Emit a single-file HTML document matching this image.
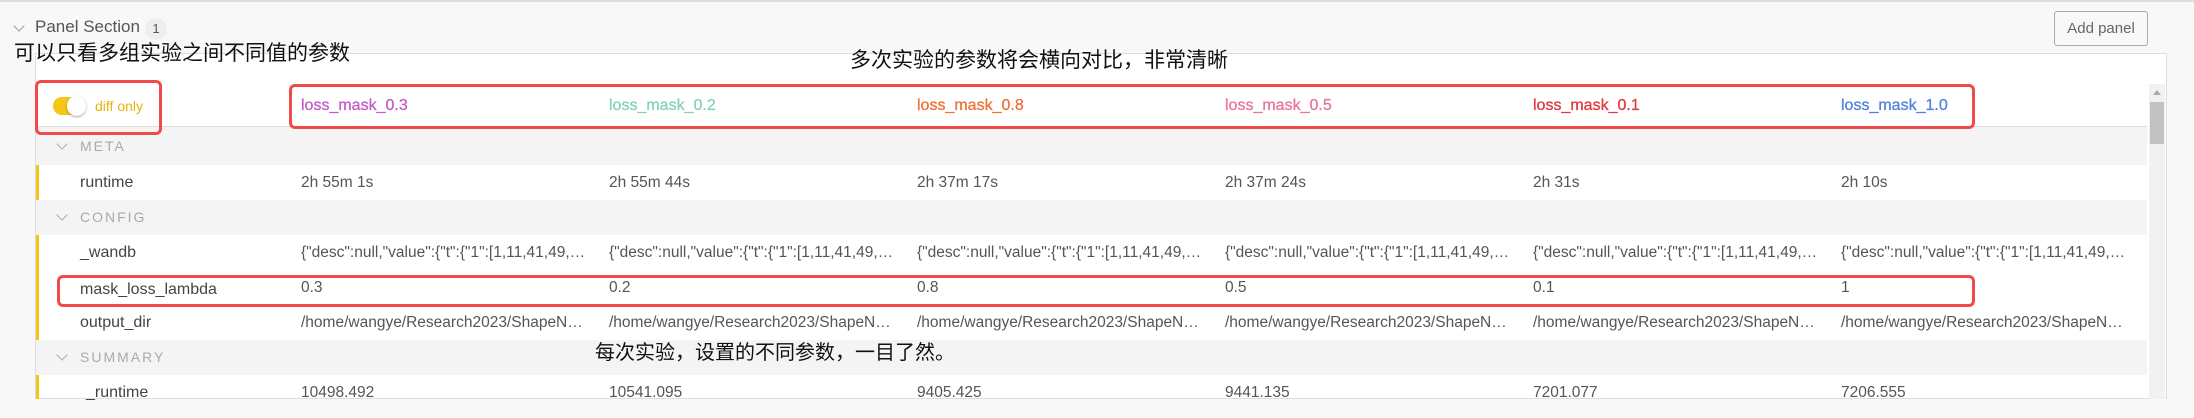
<!DOCTYPE html>
<html><head><meta charset="utf-8"><style>
*{margin:0;padding:0;box-sizing:border-box}
body{width:2194px;height:418px;background:#f8f8f8;position:relative;overflow:hidden;font-family:"Liberation Sans","Noto Sans CJK SC",sans-serif;color:#555}
.a{position:absolute;white-space:nowrap}
.cn{font-family:"Liberation Sans","Noto Sans CJK SC",sans-serif;color:#111;font-size:21px;line-height:24px}
.sec{position:absolute;left:36px;width:2111px;background:#f4f4f4}
.bar{position:absolute;left:36px;width:3px;background:#f5c518}
.lab{position:absolute;left:80px;font-size:16px;color:#444;line-height:35px}
.cell{position:absolute;font-size:15.5px;color:#555;line-height:35px;width:290px;overflow:hidden;white-space:nowrap;text-overflow:ellipsis}
.sl{position:absolute;left:80px;font-size:14px;letter-spacing:2px;color:#aaa;line-height:35px}
.chev{position:absolute;left:58px;width:8px;height:8px;border-right:1.5px solid #aaa;border-bottom:1.5px solid #aaa;transform:rotate(45deg)}
.rn{position:absolute;top:96px;font-size:16px;line-height:20px;-webkit-text-stroke:0.3px currentColor}
</style></head><body>
<div class="a" style="left:0;top:0;width:2194px;height:2px;background:#ddd"></div>
<div class="a" style="left:15px;top:22px;width:8px;height:8px;border-right:1.5px solid #999;border-bottom:1.5px solid #999;transform:rotate(45deg)"></div>
<div class="a" style="left:35px;top:17px;font-size:17px;color:#555">Panel Section</div>
<div class="a" style="left:145px;top:18px;width:22px;height:22px;border-radius:11px;background:#eee;font-size:13px;text-align:center;line-height:22px;color:#555">1</div>
<div class="a" style="left:2054px;top:11px;width:94px;height:35px;border:1px solid #aaa;border-radius:3px;background:#f8f8f8;font-size:15px;text-align:center;line-height:33px;color:#666">Add panel</div>

<div class="a" style="left:35px;top:53px;width:2132px;height:346px;border:1px solid #ddd;background:#fff"></div>
<div class="a" style="left:36px;top:126px;width:2111px;height:1px;background:#ddd"></div>

<div class="sec" style="top:127px;height:38px"></div><div class="chev" style="top:140px"></div><div class="sl" style="top:129px">META</div>
<div class="bar" style="top:165px;height:35px"></div>
<div class="lab" style="top:165px">runtime</div>
<div class="sec" style="top:200px;height:35px"></div><div class="chev" style="top:211px"></div><div class="sl" style="top:200px">CONFIG</div>
<div class="bar" style="top:235px;height:105px"></div>
<div class="lab" style="top:235px">_wandb</div>
<div class="lab" style="top:272px">mask_loss_lambda</div>
<div class="lab" style="top:305px">output_dir</div>
<div class="sec" style="top:340px;height:35px"></div><div class="chev" style="top:351px"></div><div class="sl" style="top:340px">SUMMARY</div>
<div class="bar" style="top:375px;height:24px"></div>
<div class="lab" style="top:375px;left:86px">_runtime</div>

<div class="rn" style="left:301px;color:#c65cc6">loss_mask_0.3</div>
<div class="rn" style="left:609px;color:#86d1bb">loss_mask_0.2</div>
<div class="rn" style="left:917px;color:#ee7236">loss_mask_0.8</div>
<div class="rn" style="left:1225px;color:#ea73a0">loss_mask_0.5</div>
<div class="rn" style="left:1533px;color:#e0393e">loss_mask_0.1</div>
<div class="rn" style="left:1841px;color:#4f83de">loss_mask_1.0</div>

<div class="cell" style="left:301px;top:165px">2h 55m 1s</div><div class="cell" style="left:609px;top:165px">2h 55m 44s</div><div class="cell" style="left:917px;top:165px">2h 37m 17s</div><div class="cell" style="left:1225px;top:165px">2h 37m 24s</div><div class="cell" style="left:1533px;top:165px">2h 31s</div><div class="cell" style="left:1841px;top:165px">2h 10s</div>
<div class="cell" style="left:301px;top:235px">{"desc":null,"value":{"t":{"1":[1,11,41,49,55,63],"2":[1]}}}</div><div class="cell" style="left:609px;top:235px">{"desc":null,"value":{"t":{"1":[1,11,41,49,55,63],"2":[1]}}}</div><div class="cell" style="left:917px;top:235px">{"desc":null,"value":{"t":{"1":[1,11,41,49,55,63],"2":[1]}}}</div><div class="cell" style="left:1225px;top:235px">{"desc":null,"value":{"t":{"1":[1,11,41,49,55,63],"2":[1]}}}</div><div class="cell" style="left:1533px;top:235px">{"desc":null,"value":{"t":{"1":[1,11,41,49,55,63],"2":[1]}}}</div><div class="cell" style="left:1841px;top:235px;width:290px">{"desc":null,"value":{"t":{"1":[1,11,41,49,55,63],"2":[1]}}}</div>
<div class="cell" style="left:301px;top:270px">0.3</div><div class="cell" style="left:609px;top:270px">0.2</div><div class="cell" style="left:917px;top:270px">0.8</div><div class="cell" style="left:1225px;top:270px">0.5</div><div class="cell" style="left:1533px;top:270px">0.1</div><div class="cell" style="left:1841px;top:270px">1</div>
<div class="cell" style="left:301px;top:305px">/home/wangye/Research2023/ShapeNet/output</div><div class="cell" style="left:609px;top:305px">/home/wangye/Research2023/ShapeNet/output</div><div class="cell" style="left:917px;top:305px">/home/wangye/Research2023/ShapeNet/output</div><div class="cell" style="left:1225px;top:305px">/home/wangye/Research2023/ShapeNet/output</div><div class="cell" style="left:1533px;top:305px">/home/wangye/Research2023/ShapeNet/output</div><div class="cell" style="left:1841px;top:305px;width:290px">/home/wangye/Research2023/ShapeNet/output</div>
<div class="cell" style="left:301px;top:375px">10498.492</div><div class="cell" style="left:609px;top:375px">10541.095</div><div class="cell" style="left:917px;top:375px">9405.425</div><div class="cell" style="left:1225px;top:375px">9441.135</div><div class="cell" style="left:1533px;top:375px">7201.077</div><div class="cell" style="left:1841px;top:375px">7206.555</div>

<div class="a" style="left:2149px;top:84px;width:16px;height:315px;background:#f1f1f1"></div>
<div class="a" style="left:2153px;top:90px;width:0;height:0;border-left:4px solid transparent;border-right:4px solid transparent;border-bottom:5px solid #aaa"></div>
<div class="a" style="left:2150px;top:102px;width:14px;height:42px;background:#c1c1c1"></div>

<div class="a" style="left:53px;top:97px;width:31px;height:18px;border-radius:9px;background:#f5c518"></div>
<div class="a" style="left:67px;top:96px;width:19px;height:20px;border-radius:10px;background:#fff;box-shadow:0 1px 2px rgba(0,0,0,.35)"></div>
<div class="a" style="left:95px;top:97px;font-size:14px;color:#e8b30d;line-height:18px">diff only</div>

<div class="a" style="left:35px;top:80px;width:127px;height:55px;border:3px solid #f04a4a;border-radius:6px"></div>
<div class="a" style="left:289px;top:84px;width:1686px;height:45px;border:3px solid #f04a4a;border-radius:6px"></div>
<div class="a" style="left:57px;top:275px;width:1918px;height:32px;border:3px solid #f04a4a;border-radius:6px"></div>

<div class="a cn" style="left:14px;top:42px">可以只看多组实验之间不同值的参数</div>
<div class="a cn" style="left:850px;top:49px">多次实验的参数将会横向对比，非常清晰</div>
<div class="a cn" style="left:595px;top:341px;font-size:20px">每次实验，设置的不同参数，一目了然。</div>
</body></html>
